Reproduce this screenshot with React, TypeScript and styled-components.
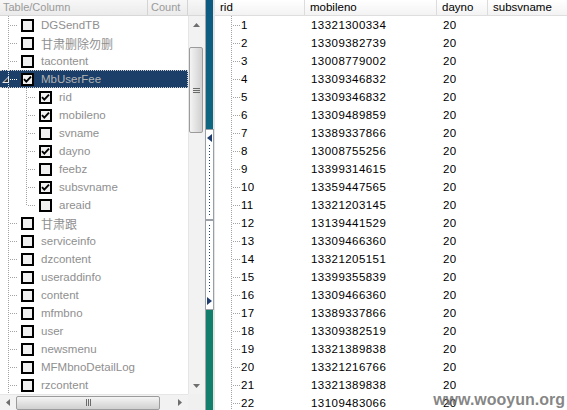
import React from 'react';
import styled, { createGlobalStyle } from 'styled-components';

const GlobalStyle = createGlobalStyle`
  html, body {
    margin: 0;
    padding: 0;
    background: #ffffff;
    overflow: hidden;
  }
  body {
    font-family: "Liberation Sans", "Noto Sans CJK SC", sans-serif;
    font-size: 11px;
  }
`;

const DOT = '#a3a3a3';

// 화면 전체
const Root = styled.div`
  position: relative;
  display: flex;
  width: 567px;
  height: 410px;
  overflow: hidden;
`;

/* ---------- 왼쪽: 테이블/컬럼 트리 ---------- */
const LeftPane = styled.div`
  flex: none;
  width: 205px;
  display: flex;
  flex-direction: column;
  background: #f0f0f0;
`;

const LeftHeader = styled.div`
  flex: none;
  height: 16px;
  display: flex;
  background: linear-gradient(#f7f7f7, #ebebeb);
  border-bottom: 1px solid #d8d8d8;
  box-sizing: border-box;
`;

const LeftHeaderCell = styled.div<{ $w: number }>`
  width: ${p => p.$w}px;
  padding-left: 3px;
  box-sizing: border-box;
  line-height: 15px;
  color: #9a9a9a;
  border-right: 1px solid #d4d4d4;
  white-space: nowrap;
`;

const LeftBody = styled.div`
  flex: 1;
  display: flex;
  min-height: 0;
`;

const TreeList = styled.div`
  width: 188px;
  flex: none;
  display: flex;
  flex-direction: column;
  background: #ffffff;
  overflow: hidden;
`;

const TreeRow = styled.div<{ $selected?: boolean }>`
  flex: none;
  height: 18px;
  display: flex;
  align-items: center;
  background: ${p => (p.$selected ? '#1b3f68' : 'transparent')};
  color: ${p => (p.$selected ? '#b4b4b4' : '#8f8f8f')};
  white-space: nowrap;
`;

const FocusFrame = styled.div`
  display: flex;
  align-items: center;
  height: 18px;
  width: 188px;
  box-sizing: border-box;
  border: 1px dotted #d0d0d0;
  border-left: none;
`;

type ConnKind = 'pass' | 'tee' | 'end';

const Connector = styled.span<{ $kind: ConnKind; $light?: boolean }>`
  flex: none;
  position: relative;
  width: 18px;
  height: 18px;
  background-image:
    repeating-linear-gradient(to bottom, ${p => (p.$light ? '#e0e0e0' : DOT)} 0 1px, transparent 1px 2px),
    ${p => (p.$kind === 'pass'
      ? 'none'
      : `repeating-linear-gradient(to right, ${p.$light ? '#ffffff' : DOT} 0 1px, transparent 1px 2px)`)};
  background-repeat: no-repeat;
  background-position: 8px 0, 10px 9px;
  background-size: 1px ${p => (p.$kind === 'end' ? '10px' : '18px')}, 7px 1px;
`;

// MbUserFee 펼침 아이콘
const Expander = styled.svg`
  position: absolute;
  left: 2px;
  top: 6px;
`;

const CheckBox = styled.span`
  flex: none;
  width: 13px;
  height: 13px;
  margin-left: 3px;
  margin-right: 7px;
  box-sizing: border-box;
  border: 2px solid #000000;
  background: #f0f0f0;
  display: flex;
  align-items: center;
  justify-content: center;
`;

const Label = styled.span<{ $cjk?: boolean }>`
  font-size: ${p => (p.$cjk ? '12px' : '11.5px')};
  font-family: ${p => (p.$cjk ? '"Noto Sans CJK SC", sans-serif' : '"Liberation Sans", sans-serif')};
`;

/* 스크롤바 */
const VScroll = styled.div`
  width: 16px;
  flex: none;
  display: flex;
  flex-direction: column;
  background: #f2f2f2;
  border-left: 1px solid #e6e6e6;
  box-sizing: border-box;
`;

const ArrowBtn = styled.div`
  flex: none;
  width: 100%;
  height: 17px;
  display: flex;
  align-items: center;
  justify-content: center;
`;

const VTrack = styled.div`
  flex: 1;
  padding-top: 14px;
`;

const VThumb = styled.div`
  height: 86px;
  margin: 0 1px 0 0;
  border: 1px solid #9b9b9b;
  border-radius: 2px;
  background: linear-gradient(to right, #f4f4f4, #dedede 60%, #d0d0d0);
  box-sizing: border-box;
  display: flex;
  align-items: center;
  justify-content: center;
`;

const HScrollRow = styled.div`
  flex: none;
  height: 16px;
  display: flex;
`;

const HScroll = styled.div`
  width: 188px;
  flex: none;
  display: flex;
  align-items: center;
  background: #f2f2f2;
  border-top: 1px solid #e6e6e6;
  box-sizing: border-box;
`;

const HArrow = styled.div`
  flex: none;
  width: 16px;
  height: 100%;
  display: flex;
  align-items: center;
  justify-content: center;
`;

const HTrack = styled.div`
  flex: 1;
  height: 100%;
  display: flex;
  align-items: center;
  padding-right: 10px;
`;

const HThumb = styled.div`
  width: 144px;
  height: 14px;
  border: 1px solid #9b9b9b;
  border-radius: 2px;
  background: linear-gradient(#f4f4f4, #dedede 60%, #d0d0d0);
  box-sizing: border-box;
  display: flex;
  align-items: center;
  justify-content: center;
`;

const Corner = styled.div`
  flex: 1;
  background: #f0f0f0;
`;

/* ---------- 가운데 분할바 ---------- */
const Splitter = styled.div`
  flex: none;
  width: 7px;
  border-left: 1px solid #a6a6a6;
  border-right: 2px solid #e4e4e4;
  background: linear-gradient(#0d5a82, #0f6a80 40%, #117e6c 70%, #12806c);
  display: flex;
  flex-direction: column;
  padding-top: 129px;
`;

const SplitGrip = styled.div`
  height: 179px;
  margin: 0 -1px;
  background: #ffffff;
  border: 1px solid #9aa0a6;
  display: flex;
  flex-direction: column;
`;

const GripHalf = styled.div<{ $down?: boolean }>`
  flex: 1;
  display: flex;
  flex-direction: ${p => (p.$down ? 'column-reverse' : 'column')};
  align-items: center;
  padding: 4px 0;
  gap: 3px;
  & + & {
    border-top: 2px solid #9aa0a6;
  }
`;

const GripDots = styled.div`
  flex: 1;
  width: 1px;
  background: repeating-linear-gradient(to bottom, #1e3d6e 0 1px, transparent 1px 3px);
`;

/* ---------- 오른쪽: 데이터 그리드 ---------- */
const RightPane = styled.div`
  flex: 1;
  display: flex;
  flex-direction: column;
  background: #ffffff;
  min-width: 0;
`;

const GridHeader = styled.div`
  flex: none;
  height: 16px;
  display: flex;
  background: linear-gradient(#ffffff, #f3f3f3);
  border-bottom: 1px solid #dedede;
  box-sizing: border-box;
`;

const COLS = [90, 132, 51, 80];

const HeadCell = styled.div<{ $w: number }>`
  flex: none;
  width: ${p => p.$w}px;
  padding-left: 5px;
  box-sizing: border-box;
  border-right: 1px solid #dcdcdc;
  line-height: 15px;
  font-size: 11.5px;
  color: #000000;
`;

const GridRow = styled.div`
  flex: none;
  height: 18px;
  display: flex;
  align-items: center;
`;

const Cell = styled.div<{ $w: number }>`
  flex: none;
  width: ${p => p.$w}px;
  box-sizing: border-box;
  padding-left: 6px;
  font-size: 11.5px;
  letter-spacing: 0.45px;
  color: #000000;
  display: flex;
  align-items: center;
  height: 18px;
`;

const RidCell = styled(Cell)`
  padding-left: 0;
  letter-spacing: 0.3px;
`;

const RidGap = styled.span`
  width: 8px;
  flex: none;
`;

const Watermark = styled.div`
  position: absolute;
  right: 2px;
  bottom: 1px;
  font-family: "Liberation Sans", sans-serif;
  font-weight: bold;
  font-size: 16px;
  line-height: 18px;
  color: rgba(112, 112, 112, 0.85);
`;

/* ---------- 데이터 ---------- */
interface INode {
  name: string;
  checked?: boolean;
  selected?: boolean;
  children?: INode[];
}

const tree: INode[] = [
  { name: 'DGSendTB' },
  { name: '甘肃删除勿删' },
  { name: 'tacontent' },
  {
    name: 'MbUserFee', checked: true, selected: true,
    children: [
      { name: 'rid', checked: true },
      { name: 'mobileno', checked: true },
      { name: 'svname' },
      { name: 'dayno', checked: true },
      { name: 'feebz' },
      { name: 'subsvname', checked: true },
      { name: 'areaid' },
    ],
  },
  { name: '甘肃跟' },
  { name: 'serviceinfo' },
  { name: 'dzcontent' },
  { name: 'useraddinfo' },
  { name: 'content' },
  { name: 'mfmbno' },
  { name: 'user' },
  { name: 'newsmenu' },
  { name: 'MFMbnoDetailLog' },
  { name: 'rzcontent' },
];

const mobiles = [
  '13321300334', '13309382739', '13008779002', '13309346832', '13309346832',
  '13309489859', '13389337866', '13008755256', '13399314615', '13359447565',
  '13321203145', '13139441529', '13309466360', '13321205151', '13399355839',
  '13309466360', '13389337866', '13309382519', '13321389838', '13321216766',
  '13321389838', '13109483066',
];

const isCjk = (s: string) => /[\u4e00-\u9fff]/.test(s);

function Tick() {
  return (
    <svg width="9" height="9" viewBox="0 0 9 9">
      <path d="M1 4.2 L3.3 6.6 L8 1.6" fill="none" stroke="#000" strokeWidth="1.9" />
    </svg>
  );
}

function Tri({ dir }: { dir: 'up' | 'down' | 'left' | 'right' }) {
  const pts = {
    up: '0,4 3.5,0 7,4',
    down: '0,0 7,0 3.5,4',
    left: '4,0 4,7 0,3.5',
    right: '0,0 0,7 4,3.5',
  }[dir];
  const vertical = dir === 'up' || dir === 'down';
  return (
    <svg width={vertical ? 7 : 4} height={vertical ? 4 : 7} viewBox={vertical ? '0 0 7 4' : '0 0 4 7'}>
      <polygon points={pts} fill="#6e6e6e" />
    </svg>
  );
}

function Grip({ vertical }: { vertical: boolean }) {
  return vertical ? (
    <svg width="7" height="7" viewBox="0 0 7 7">
      <path d="M0 1.5H7M0 3.5H7M0 5.5H7" stroke="#6a6a6a" strokeWidth="1" />
    </svg>
  ) : (
    <svg width="7" height="7" viewBox="0 0 7 7">
      <path d="M1.5 0V7M3.5 0V7M5.5 0V7" stroke="#6a6a6a" strokeWidth="1" />
    </svg>
  );
}

function TreeItem({ node, level, last }: { node: INode; level: number; last?: boolean }) {
  const body = (
    <>
      {level === 1 && <Connector $kind="pass" />}
      <Connector $kind={level === 1 && last ? 'end' : 'tee'} $light={node.selected}>
        {node.selected && (
          <Expander width="7" height="7" viewBox="0 0 7 7">
            <polygon points="7,0 7,7 0,7" fill="#e8e8e8" />
            <polygon points="6,2 6,6 2,6" fill="#303030" />
          </Expander>
        )}
      </Connector>
      <CheckBox>{node.checked && <Tick />}</CheckBox>
      <Label $cjk={isCjk(node.name)}>{node.name}</Label>
    </>
  );
  return (
    <TreeRow $selected={node.selected}>
      {node.selected ? <FocusFrame>{body}</FocusFrame> : body}
    </TreeRow>
  );
}

export default function App() {
  return (
    <Root>
      <GlobalStyle />
      <LeftPane>
        <LeftHeader>
          <LeftHeaderCell $w={148}>Table/Column</LeftHeaderCell>
          <LeftHeaderCell $w={40}>Count</LeftHeaderCell>
        </LeftHeader>
        <LeftBody>
          <TreeList>
            {tree.map(n => (
              <React.Fragment key={n.name}>
                <TreeItem node={n} level={0} />
                {n.children?.map((c, i) => (
                  <TreeItem key={c.name} node={c} level={1} last={i === n.children!.length - 1} />
                ))}
              </React.Fragment>
            ))}
          </TreeList>
          <VScroll>
            <ArrowBtn><Tri dir="up" /></ArrowBtn>
            <VTrack>
              <VThumb><Grip vertical /></VThumb>
            </VTrack>
            <ArrowBtn><Tri dir="down" /></ArrowBtn>
          </VScroll>
        </LeftBody>
        <HScrollRow>
          <HScroll>
            <HArrow><Tri dir="left" /></HArrow>
            <HTrack>
              <HThumb><Grip vertical={false} /></HThumb>
            </HTrack>
            <HArrow><Tri dir="right" /></HArrow>
          </HScroll>
          <Corner />
        </HScrollRow>
      </LeftPane>

      <Splitter>
        <SplitGrip>
          <GripHalf>
            <svg width="5" height="8" viewBox="0 0 5 8"><polygon points="5,0 5,8 0,4" fill="#1e3d6e" /></svg>
            <GripDots />
          </GripHalf>
          <GripHalf $down>
            <svg width="5" height="8" viewBox="0 0 5 8"><polygon points="0,0 0,8 5,4" fill="#1e3d6e" /></svg>
            <GripDots />
          </GripHalf>
        </SplitGrip>
      </Splitter>

      <RightPane>
        <GridHeader>
          <HeadCell $w={COLS[0]}>rid</HeadCell>
          <HeadCell $w={COLS[1]}>mobileno</HeadCell>
          <HeadCell $w={COLS[2]}>dayno</HeadCell>
          <HeadCell $w={COLS[3]}>subsvname</HeadCell>
        </GridHeader>
        {mobiles.map((m, i) => (
          <GridRow key={i}>
            <RidCell $w={COLS[0]}>
              <RidGap />
              <Connector $kind="tee" />
              {i + 1}
            </RidCell>
            <Cell $w={COLS[1]}>{m}</Cell>
            <Cell $w={COLS[2]}>20</Cell>
            <Cell $w={COLS[3]} />
          </GridRow>
        ))}
      </RightPane>

      <Watermark>www.wooyun.org</Watermark>
    </Root>
  );
}
